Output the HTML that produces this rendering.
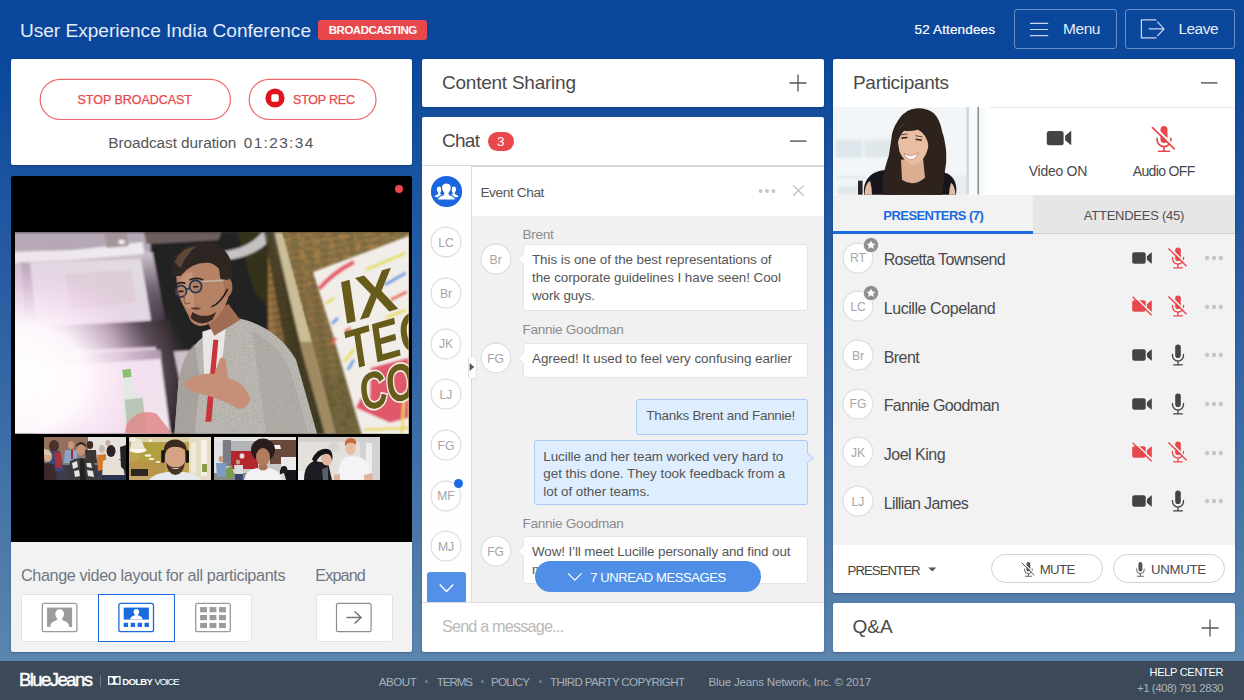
<!DOCTYPE html>
<html><head><meta charset="utf-8"><title>User Experience India Conference</title>
<style>
html,body{margin:0;padding:0}
body{width:1244px;height:700px;overflow:hidden;position:relative;font-family:'Liberation Sans',sans-serif;
background:linear-gradient(180deg,#0a469b 0px,#0b489c 60px,#2a5fa3 300px,#5c85ad 661px,#5c85ad 700px)}
div,span.t,svg{position:absolute;box-sizing:border-box}
span.t{white-space:pre;line-height:1;display:block}
.p{background:#fff;border-radius:2px;box-shadow:0 1px 2px rgba(10,30,60,.3)}
.av{width:31px;height:31px;border-radius:50%;background:#fff;border:1px solid #d9d9d9}
.bub{background:#fff;border:1px solid #e4e4e4;border-radius:3px}
.bb{background:#dfeefe;border:1px solid #a9cbf5;border-radius:3px}
</style></head><body>
<span class="t" style="left:20.00px;top:21.20px;font-size:19.1px;color:#e4ecf8;letter-spacing:-0.028px;">User Experience India Conference</span><div style="left:318px;top:19.5px;width:109px;height:20.5px;background:#e8474c;border-radius:3px"></div><span class="t" style="left:328.80px;top:24.50px;font-size:11.5px;color:#fff;font-weight:700;letter-spacing:-0.493px;">BROADCASTING</span><span class="t" style="left:914.50px;top:23.00px;font-size:13.5px;color:#fff;letter-spacing:0.152px;-webkit-text-stroke:0.2px #fff;">52 Attendees</span><div style="left:1014px;top:9.4px;width:102.6px;height:39.8px;border:1px solid rgba(255,255,255,.38);border-radius:3px"></div><svg style="left:1030px;top:22px" width="19" height="16" viewBox="0 0 19 16"><path d="M0,1.4H18.2M0,7.5H18.2M0,13.7H18.2" stroke="#c9d8ee" stroke-width="1.2" fill="none"/></svg><span class="t" style="left:1063.00px;top:21.00px;font-size:15.5px;color:#e4ecf8;letter-spacing:-0.427px;">Menu</span><div style="left:1125px;top:9.4px;width:110.2px;height:39.8px;border:1px solid rgba(255,255,255,.38);border-radius:3px"></div><svg style="left:1140px;top:18px" width="26" height="22" viewBox="1140 18 26 22"><path d="M1156.4,19.8H1141.4V37.9H1156.4M1148.8,28.9H1163.6M1157.3,21.6L1164,28.9L1157.3,36.2" stroke="#c9d8ee" stroke-width="1.2" fill="none"/></svg><span class="t" style="left:1178.50px;top:21.00px;font-size:15.5px;color:#e4ecf8;letter-spacing:-0.559px;">Leave</span><div class="p" style="left:11px;top:59px;width:401px;height:106px"></div><svg style="left:39px;top:78px" width="340" height="43" viewBox="39 78 340 43"><rect x="40.2" y="79.3" width="190.2" height="40.2" rx="20.1" fill="none" stroke="#f0676b" stroke-width="1.2"/><rect x="249.2" y="79.3" width="126.8" height="40.2" rx="20.1" fill="none" stroke="#f0676b" stroke-width="1.2"/></svg><span class="t" style="left:77.50px;top:94.00px;font-size:12.5px;color:#e8474c;letter-spacing:-0.026px;-webkit-text-stroke:0.25px #e8474c;">STOP BROADCAST</span><svg style="left:265px;top:88px" width="20" height="20" viewBox="-10 -10 20 20"><circle r="9.6" fill="#e0141d"/><rect x="-3.7" y="-3.7" width="7.4" height="7.4" rx="1.6" fill="#fff"/></svg><span class="t" style="left:293.00px;top:94.00px;font-size:12.5px;color:#e8474c;letter-spacing:-0.208px;-webkit-text-stroke:0.25px #e8474c;">STOP REC</span><span class="t" style="left:108.25px;top:135.05px;font-size:15.4px;color:#555;letter-spacing:-0.071px;">Broadcast duration</span><span class="t" style="left:243.75px;top:135.05px;font-size:15.4px;color:#555;letter-spacing:1.368px;">01:23:34</span><div style="left:11px;top:175.5px;width:401px;height:366.5px;background:#000;border-radius:2px 2px 0 0"></div><div style="left:11px;top:541.6px;width:401px;height:110.4px;background:#f2f2f2;border-radius:0 0 2px 2px;box-shadow:0 1px 2px rgba(10,30,60,.3)"></div>
<svg style="left:15px;top:232px" width="393.7" height="201.7" viewBox="0 0 395 202" preserveAspectRatio="none">
<defs>
<filter id="b3" x="-10%" y="-10%" width="120%" height="120%"><feGaussianBlur stdDeviation="1.3"/></filter>
<filter id="b15" x="-10%" y="-10%" width="120%" height="120%"><feGaussianBlur stdDeviation="1.1"/></filter>
<filter id="b07" x="-10%" y="-10%" width="120%" height="120%"><feGaussianBlur stdDeviation="0.6"/></filter>
<radialGradient id="flare" gradientUnits="userSpaceOnUse" cx="0" cy="0" r="120" gradientTransform="translate(2 146) scale(1.45 1.12)"><stop offset="0" stop-color="#fff" stop-opacity="1"/><stop offset="0.4" stop-color="#fff8fd" stop-opacity=".97"/><stop offset="0.62" stop-color="#f8e0f4" stop-opacity=".68"/><stop offset="0.82" stop-color="#eccce8" stop-opacity=".24"/><stop offset="1" stop-color="#e8c8e4" stop-opacity="0"/></radialGradient>
<linearGradient id="wall" x1="0" y1="0" x2="0" y2="1"><stop offset="0" stop-color="#ac8648"/><stop offset="0.35" stop-color="#946f40"/><stop offset="0.7" stop-color="#78663a"/><stop offset="1" stop-color="#686232"/></linearGradient>
<linearGradient id="rfr" x1="0" y1="0" x2="0" y2="1"><stop offset="0" stop-color="#cfc6d0"/><stop offset="0.45" stop-color="#7a6a7a"/><stop offset="1" stop-color="#2e2430"/></linearGradient>
<linearGradient id="mbar" gradientUnits="userSpaceOnUse" x1="20" y1="0" x2="125" y2="0"><stop offset="0" stop-color="#d4b4d0"/><stop offset="0.5" stop-color="#6a506a"/><stop offset="1" stop-color="#2a2028"/></linearGradient>
<pattern id="brick" width="14" height="7" patternUnits="userSpaceOnUse" patternTransform="rotate(-8)"><rect x="0" y="0" width="6" height="3" fill="#c08a4c" opacity=".45"/><rect x="7" y="3.5" width="6" height="3" fill="#4a3e22" opacity=".45"/></pattern>
<filter id="nz" x="0" y="0" width="100%" height="100%"><feTurbulence type="fractalNoise" baseFrequency="0.9" numOctaves="2" seed="3" result="n"/><feColorMatrix in="n" type="matrix" values="0 0 0 0 0.35  0 0 0 0 0.33  0 0 0 0 0.3  1.6 1.6 1.6 0 -1.9"/></filter>
<filter id="nz2" x="0" y="0" width="100%" height="100%"><feTurbulence type="fractalNoise" baseFrequency="0.12 0.3" numOctaves="3" seed="8" result="n"/><feColorMatrix in="n" type="matrix" values="0 0 0 0 0.18  0 0 0 0 0.14  0 0 0 0 0.06  2.2 2.2 2.2 0 -2.6"/><feGaussianBlur stdDeviation="0.8"/></filter>
<clipPath id="card"><path d="M160,202 L164,150 Q170,116 196,100 L222,86 Q262,94 282,128 L303,202Z"/></clipPath>
<clipPath id="wallc"><path d="M268,0 L395,0 L395,14 L300,42 L352,202 L322,202 L298,110Z"/></clipPath>
<clipPath id="pc"><rect x="0" y="0" width="395" height="202"/></clipPath>
</defs>
<g clip-path="url(#pc)">
<rect width="395" height="202" fill="#cbc0ca"/>
<g filter="url(#b3)">
<rect x="-10" y="-10" width="160" height="30" fill="#b6a8b6"/>
<path d="M-5,20 L60,18 L128,10 L130,22 L60,28 L-5,31Z" fill="#eee9ee"/>
<path d="M90,2 L112,1 L114,14 L92,16Z" fill="#a4949c"/><rect x="104" y="8" width="6" height="4" fill="#f4f0f4"/>
<rect x="136" y="-10" width="132" height="112" fill="#242022"/>
<path d="M136,100 L262,60 L262,112 L150,120Z" fill="#242022"/>
<path d="M128,-6 L210,-6 L204,8 L170,10 L132,12Z" fill="#6e5e5e"/>
<path d="M222,-4 L262,-4 L262,84 L240,60Z" fill="#34331c"/>
<path d="M190,20 Q236,22 252,-6 L264,-6 Q250,30 192,29Z" fill="#c6c2c4"/>
<path d="M15,31 L126,27 L137,88 L22,95Z" fill="#e2dae2"/>
<path d="M50,42 L116,38 L122,70 L56,78Z" fill="#d8c6ce" opacity=".6"/>
<path d="M6,30 L15,31 L22,97 L11,99Z" fill="#b4a2b6"/>
<path d="M126,22 L138,20 L152,94 L137,92Z" fill="url(#rfr)"/>
<path d="M20,95 L156,88 L158,114 L22,120Z" fill="url(#mbar)"/>
<path d="M141,112 L157,110 L175,202 L155,202Z" fill="#2a2028"/>
<path d="M28,132 L146,126 L156,202 L20,202Z" fill="#f2e9ef"/>
<path d="M34,124 L146,118 L147,127 L35,135Z" fill="#a48ea2"/>
<rect x="254" y="-10" width="160" height="222" fill="url(#wall)"/>
<rect x="254" y="-10" width="160" height="222" fill="url(#brick)"/>
<path d="M300,150 L350,140 L352,202 L316,202Z" fill="#5a5428" opacity=".5"/>
<path d="M256,-4 L267,-4 L298,110 L322,202 L309,202 L286,110Z" fill="#cbbd96"/>
<path d="M286,110 L298,110 L322,202 L309,202Z" fill="#a08a62"/>
<path d="M248,-10 L258,-10 L288,120 L311,202 L292,202 L272,120Z" fill="#2e2c1c" opacity=".75"/>
<rect x="-5" y="-4" width="410" height="5" fill="#3a3028" opacity=".7"/>
</g>
<g clip-path="url(#wallc)"><rect x="254" y="0" width="141" height="202" filter="url(#nz2)" opacity=".8"/></g>
<rect width="395" height="202" fill="url(#flare)"/>
<g filter="url(#b15)">
<path d="M299,40 L363,16 L400,2 L400,210 L350,210 L318,100Z" fill="#f1ede8"/>
<path d="M305,57 Q320,40 340,30" stroke="#e6586a" stroke-width="4.4" fill="none"/>
<path d="M352,38 L392,21" stroke="#e6de5c" stroke-width="3" fill="none"/>
<path d="M371,53 L392,41 M318,92 L324,86 M334,138 L340,128" stroke="#6a9ee0" stroke-width="3" fill="none"/>
<path d="M377,68 L393,60 M331,100 L337,96 M318,112 L322,106" stroke="#ea6a52" stroke-width="3" fill="none"/>
<path d="M312,72 L320,66 M330,130 L340,118 M372,86 L392,78" stroke="#e8de5a" stroke-width="3" fill="none"/>
<path d="M357,136 L395,126 L395,186 L376,191 L342,176 L347,166 L356,168Z" fill="#e0586a"/>
<path d="M350,198 L395,196 M391,160 L388,202" stroke="#ead85a" stroke-width="2.5" fill="none"/>
</g>
<g filter="url(#b07)" font-family="'Liberation Sans',sans-serif" font-weight="700" fill="#675c1b">
<text transform="matrix(0.961 -0.276 0.147 0.989 329.3 92.9)" font-size="61" textLength="58" lengthAdjust="spacingAndGlyphs">IX</text>
<text transform="matrix(0.961 -0.276 0.147 0.989 335.7 138.5)" font-size="56" textLength="86" lengthAdjust="spacingAndGlyphs">TEC</text>
<text transform="matrix(0.961 -0.276 0.147 0.989 349 180)" font-size="52" textLength="57" lengthAdjust="spacingAndGlyphs" stroke="#f1ede8" stroke-width="3.5" paint-order="stroke">CO</text>
</g>
<g filter="url(#b07)">
<!-- bottle -->
<path d="M108,142 L116,141 L119,156 Q128,166 130,180 L133,202 L112,202 L108,178 Q106,166 110,156Z" fill="#e4e8e2"/>
<path d="M110,168 L128,166 L132,202 L113,202Z" fill="#a8b8a6" opacity=".7"/>
<path d="M107.5,138 L116,137 L117,145 L108.5,146Z" fill="#8cc070"/>
<path d="M112,192 Q124,176 142,182 L158,202 L110,202Z" fill="#e08a8a" opacity=".85"/>
<!-- man body -->
<path d="M160,202 L164,150 Q170,116 196,100 L222,86 Q262,94 282,128 L303,202Z" fill="#c2beb9"/>
<path d="M238,100 Q268,112 280,150 L294,202 L252,202Z" fill="#aeaaa5" opacity=".7"/>
<path d="M160,202 L164,150 Q168,124 180,112 L186,150 L180,202Z" fill="#9a9590" opacity=".6"/>
<g clip-path="url(#card)"><rect x="155" y="80" width="155" height="125" filter="url(#nz)" opacity=".55"/></g>
<path d="M188,100 L212,92 L206,146 L190,150Z" fill="#ebe6e6"/>
<path d="M199,108 L204,108 L197,190 L191,190Z" fill="#c8343c"/>
<path d="M190,84 L214,72 L226,88 L200,104Z" fill="#a06c52"/>
<!-- head -->
<path d="M162,46 Q160,22 182,16 Q206,10 214,32 L216,58 Q212,76 204,84 Q196,95 184,94 Q176,92 174,84 L168,72 Q162,60 162,46Z" fill="#b58266"/>
<path d="M164,52 Q168,40 178,40 L180,80 Q172,76 168,70Z" fill="#c89c82" opacity=".7"/>
<path d="M158,44 Q154,18 180,12 Q208,5 217,30 L218,54 L211,56 Q210,36 196,31 Q178,29 166,44Z" fill="#2e2521"/>
<path d="M160,30 Q166,16 182,14 Q172,22 166,36Z" fill="#5c4638"/>
<path d="M176,86 Q186,96 198,88 L202,80 Q190,88 178,80Z" fill="#3a2a22"/>
<ellipse cx="166.6" cy="59.4" rx="5.4" ry="5.8" fill="#a87a62" fill-opacity=".5" stroke="#2e3450" stroke-width="1.8"/>
<ellipse cx="181.2" cy="54.6" rx="6" ry="6.2" fill="#a87a62" fill-opacity=".5" stroke="#2e3450" stroke-width="1.8"/>
<path d="M172,57.5 L175.4,56.2" stroke="#2e3450" stroke-width="1.6"/>
<path d="M164,59.5 h5 M178.6,54.8 h5.4" stroke="#2a1c18" stroke-width="1.6"/>
<path d="M160.5,53 Q166,49.5 171,51.5 M175,48 Q182,45 189,48" stroke="#2a1c18" stroke-width="1.7" fill="none"/>
<path d="M187,49.6 L210,48.4" fill="none" stroke="#c4b4a0" stroke-width="1.7"/>
<path d="M171,62 Q168,70 171.5,72 L176,71" fill="none" stroke="#8e5c44" stroke-width="1.4"/>
<path d="M175.6,76 Q181,74.5 187,76.4 Q181,79.6 175.6,76Z" fill="#6a3a30"/>
<path d="M209,46 Q219,44 218,58 Q215,68 210,64Z" fill="#a87458"/>
<path d="M204,30 L216,32 L214,48 L206,47Z" fill="#2e2521"/>
<path d="M213.5,57 Q206,72 197,75" fill="none" stroke="#1a1a1a" stroke-width="1.5"/>
<!-- right hand -->
<path d="M170,150 Q186,140 200,142 L206,126 Q212,124 212,132 L214,146 Q232,152 236,168 Q232,180 222,176 Q204,166 186,162 Q170,158 170,150Z" fill="#c69078"/>
</g>
</g></svg>
<svg style="left:44.3px;top:437px" width="82" height="43" viewBox="0 0 82 43"><g filter="url(#b07)"><rect width="82" height="43" fill="#8a7a72"/>
<rect x="0" y="0" width="46" height="18" fill="#94705f"/><rect x="44" y="0" width="38" height="22" fill="#e6e2de"/>
<rect x="0" y="28" width="82" height="15" fill="#3a3a48"/>
<ellipse cx="10" cy="9" rx="5" ry="6" fill="#4a3026"/><path d="M4,14 L16,14 L20,34 L2,34Z" fill="#3a4a78"/><path d="M10,15 L17,16 L18,32 L12,30Z" fill="#a83038"/>
<ellipse cx="4" cy="20" rx="4" ry="5" fill="#d8a88c"/><path d="M0,26 L10,27 L13,43 L0,43Z" fill="#3a2c2a"/><path d="M0,12 Q6,12 8,18 L0,18Z" fill="#d8c8a8"/>
<ellipse cx="27" cy="8" rx="3" ry="4" fill="#c99a80"/><path d="M21,13 L33,13 L34,26 L20,26Z" fill="#8aa4cc"/><rect x="27" y="13" width="2" height="9" fill="#a8282e"/>
<ellipse cx="37" cy="13" rx="4.5" ry="5.5" fill="#c49478"/><path d="M32,10 Q37,4 42,10 L42,8 Q37,2 32,8Z" fill="#2a2422"/>
<path d="M26,24 Q36,18 50,24 L53,43 L24,43Z" fill="#3a3a3a"/><path d="M28,26 L33,24 L34,30 L29,32Z M30,34 L35,33 L36,39 L31,40Z M42,24 L47,26 L48,31 L43,30Z M43,33 L49,34 L50,40 L44,39Z M36,40 L40,40 L40,43 L36,43Z" fill="#e4e4e4"/><path d="M36,22 L40,22 L42,43 L36,43Z" fill="#222"/>
<ellipse cx="46" cy="8" rx="3.2" ry="4" fill="#3a2a26"/><path d="M41,13 L52,13 L53,26 L42,26Z" fill="#3a3434"/>
<ellipse cx="58" cy="12" rx="3" ry="4" fill="#c8b8a8"/><path d="M53,18 L62,17 L62,32 L54,34Z" fill="#d07a2a"/>
<ellipse cx="67" cy="14" rx="4.5" ry="6" fill="#2a2426"/><path d="M59,24 Q68,18 78,24 L81,40 L58,40Z" fill="#e8e0d4"/>
<path d="M76,10 L82,8 L82,34 L77,30Z" fill="#222428"/><ellipse cx="64" cy="6" rx="2.4" ry="3" fill="#caa"/>
<path d="M58,38 L82,38 L82,43 L58,43Z" fill="#2a3050"/></g></svg><svg style="left:129.1px;top:437px" width="82" height="43" viewBox="0 0 82 43"><g filter="url(#b07)"><rect width="82" height="43" fill="#bda352"/>
<rect x="0" y="0" width="82" height="5" fill="#dccfa8"/><rect x="0" y="24" width="36" height="19" fill="#b8954c"/>
<rect x="60" y="0" width="22" height="43" fill="#e4dcc4"/><rect x="72" y="3" width="6" height="36" fill="#f4f0e6"/><rect x="62" y="6" width="5" height="30" fill="#f0ead8"/>
<rect x="10" y="6" width="24" height="18" fill="#b0a040"/>
<ellipse cx="9" cy="13" rx="8.5" ry="3" fill="#fbf8ee"/><path d="M3,2 L12,2 L16,12 L1,12Z" fill="#eae4d2"/><ellipse cx="4" cy="2.5" rx="3.5" ry="2" fill="#f4f0e4"/>
<ellipse cx="19" cy="18.5" rx="3.4" ry="1.2" fill="#f8f4e8"/><ellipse cx="22.5" cy="22" rx="3" ry="1.1" fill="#f8f4e8"/><ellipse cx="29" cy="25" rx="2.4" ry="1" fill="#f4eedc"/><circle cx="21.5" cy="3.5" r="1.2" fill="#fff"/>
<rect x="2" y="32" width="17" height="7" fill="#2e2824"/><rect x="0" y="39" width="30" height="4" fill="#c8a868"/>
<path d="M20,43 Q26,36 38,35 L56,35 Q68,37 72,43Z" fill="#e6e8ec"/>
<ellipse cx="46.5" cy="22" rx="9.8" ry="14" fill="#d6a484"/>
<path d="M35,18 Q33,3 46,2.5 Q59,3 58,18 L56,13 Q51,9 43,10 Q37,11 36,18Z" fill="#3a2a20"/>
<path d="M37,25 Q38,37 46.5,38 Q55,37 56,25 Q53,31 46.5,30 Q40,31 37,25Z" fill="#4a3226"/>
<path d="M42,30.5 Q46.5,33.5 51,30.5 Q46.5,31.5 42,30.5Z" fill="#f4eeee"/>
<rect x="32.2" y="13" width="3.6" height="13" rx="1.7" fill="#181818"/><rect x="56.4" y="13" width="3.6" height="13" rx="1.7" fill="#181818"/>
<rect x="73" y="27" width="5" height="8" fill="#8a9a4a"/></g></svg><svg style="left:213.8px;top:437px" width="82" height="43" viewBox="0 0 82 43"><g filter="url(#b07)"><rect width="82" height="43" fill="#c8c8c8"/>
<rect x="0" y="0" width="82" height="4" fill="#e8e6e2"/><rect x="0" y="4" width="8" height="39" fill="#e2e2e2"/>
<rect x="9" y="3" width="8" height="26" fill="#7a7e84"/><rect x="17" y="4" width="24" height="10" fill="#b4b4b8"/>
<rect x="17" y="14" width="27" height="18" fill="#b4282e"/><ellipse cx="28" cy="19" rx="2.4" ry="2.8" fill="#e8d8d8"/>
<rect x="56" y="3" width="26" height="24" fill="#6a4a3c"/><rect x="67" y="20" width="15" height="14" fill="#eaeaec"/>
<path d="M60,8 L66,8 L67,12 L59,12Z" fill="#f4f4f4"/>
<rect x="0" y="36" width="40" height="7" fill="#8a8a8a"/><rect x="66" y="33" width="16" height="10" fill="#18181a"/>
<ellipse cx="7" cy="22" rx="2.4" ry="3" fill="#c8987c"/><path d="M2,26 L12,26 L13,40 L3,40Z" fill="#7a9cc4"/>
<ellipse cx="24" cy="25" rx="2.2" ry="2.6" fill="#c89a80"/><path d="M20,28 L29,28 L29,38 L21,38Z" fill="#dcdcdc"/><rect x="21" y="37" width="8" height="6" fill="#3a4a6a"/>
<path d="M12,32 L18,28 L20,40 L12,42Z" fill="#7a9a50"/>
<ellipse cx="70" cy="33" rx="3.4" ry="4" fill="#1c1a1c"/><path d="M64,38 L70,36 L72,43 L64,43Z" fill="#dcdcdc"/>
<ellipse cx="49" cy="13" rx="12" ry="11.5" fill="#2a1f1c"/>
<ellipse cx="49" cy="20" rx="7" ry="9" fill="#b27c5e"/><path d="M45,28 L53,28 L54,34 L44,34Z" fill="#a87254"/>
<path d="M30,43 Q32,32 44,31 Q49,36 54,31 Q66,32 67,43Z" fill="#f2f2f2"/></g></svg><svg style="left:297.8px;top:437px" width="82" height="43" viewBox="0 0 82 43"><g filter="url(#b07)"><rect width="82" height="43" fill="#e4e0dc"/>
<rect x="0" y="0" width="82" height="5" fill="#d4d0cc"/><rect x="62" y="2" width="20" height="41" fill="#d2d2d4"/><rect x="68" y="6" width="6" height="30" fill="#eeeef0"/>
<rect x="0" y="34" width="10" height="9" fill="#f0f0f2"/><ellipse cx="36" cy="10" rx="6" ry="5" fill="#d8d4d0"/>
<path d="M6,43 Q6,28 16,24 L30,26 L34,43Z" fill="#1c1c22"/>
<path d="M14,22 Q20,10 30,12 Q36,14 34,24 Q30,16 24,18 Q18,22 18,28Z" fill="#181618"/>
<ellipse cx="28.5" cy="22.5" rx="5.2" ry="6" fill="#e2b69c" transform="rotate(-18 28.5 22.5)"/>
<path d="M22,16 Q28,12 34,18 Q30,15 24,18Z" fill="#181618"/>
<path d="M24,32 L30,30 L30,43 L25,43Z" fill="#5a6068"/>
<path d="M40,43 Q40,24 48,20 L58,19 Q70,22 72,32 L74,43Z" fill="#f4f4f6"/>
<ellipse cx="52.5" cy="11.5" rx="5" ry="6.5" fill="#e8bea2"/>
<path d="M47,9 Q46,1 53,1 Q59,1 58,8 Q55,5 50,6Z" fill="#c8683a"/>
<path d="M66,38 L74,36 L75,43 L66,43Z" fill="#e0b49a"/><path d="M36,38 L42,37 L42,43 L36,43Z" fill="#e0b49a"/></g></svg><div style="left:394.5px;top:184.5px;width:8px;height:8px;background:#e8474c;border-radius:50%"></div><span class="t" style="left:21.00px;top:567.15px;font-size:16.2px;color:#6f7680;letter-spacing:-0.371px;">Change video layout for all participants</span><span class="t" style="left:315.30px;top:567.15px;font-size:16.2px;color:#6f7680;letter-spacing:-0.881px;">Expand</span><div style="left:21px;top:593.5px;width:231px;height:48px;background:#fff;border:1px solid #e2e2e2;border-radius:3px"></div><div style="left:97.5px;top:593.5px;width:77.5px;height:48px;border:1px solid #1a6ae0"></div><div style="left:315.5px;top:593.5px;width:77.5px;height:48px;background:#fff;border:1px solid #e2e2e2;border-radius:3px"></div>
<svg style="left:21px;top:593px" width="380" height="50" viewBox="21 593 380 50">
<g fill="none" stroke="#9a9a9a" stroke-width="1.3">
<rect x="42.3" y="603.3" width="34.6" height="28.4" rx="2"/>
<rect x="195.7" y="603.3" width="34.6" height="28.4" rx="2"/>
</g>
<rect x="336.5" y="603.3" width="34.6" height="28.4" rx="1.8" fill="none" stroke="#8c8c8c" stroke-width="1.2"/>
<path d="M346.4,617.5H360.6M354.6,611.5L361,617.5L354.6,623.5" fill="none" stroke="#777" stroke-width="1.6"/>
<rect x="118.9" y="603.3" width="34.6" height="28.4" rx="2" fill="none" stroke="#1a6ae0" stroke-width="1.3"/>
<!-- icon1 person -->
<rect x="47.1" y="607.6" width="25" height="19.3" fill="#9b9b9b"/>
<path d="M50.4,626.9 C50.4,622 53.5,621.6 56.6,620.2 C57.6,619.7 57.4,618.6 56.6,617.6 C54.2,614.8 55.2,609.3 59.7,609.3 C64.2,609.3 65.2,614.8 62.8,617.6 C62,618.6 61.8,619.7 62.8,620.2 C65.9,621.6 69,622 69,626.9 Z" fill="#fff"/>
<!-- icon2 -->
<rect x="123.7" y="607.6" width="25.2" height="12" fill="#1a6ae0"/>
<path d="M130.3,619.6 C130.3,616.6 132.3,616.4 134.3,615.5 C135,615.2 134.9,614.5 134.4,613.9 C132.8,612.1 133.5,608.9 136.4,608.9 C139.3,608.9 140,612.1 138.4,613.9 C137.9,614.5 137.8,615.2 138.5,615.5 C140.5,616.4 142.5,616.6 142.5,619.6 Z" fill="#fff"/>
<g fill="#1a6ae0"><rect x="123.7" y="622.8" width="4.4" height="4.2"/><rect x="130.7" y="622.8" width="4.4" height="4.2"/><rect x="137.6" y="622.8" width="4.4" height="4.2"/><rect x="144.5" y="622.8" width="4.4" height="4.2"/></g>
<!-- icon3 grid -->
<g fill="#9b9b9b">
<rect x="200.1" y="607.1" width="6.9" height="5.2"/><rect x="209.5" y="607.1" width="6.9" height="5.2"/><rect x="219" y="607.1" width="6.9" height="5.2"/><rect x="200.1" y="615" width="6.9" height="5.2"/><rect x="209.5" y="615" width="6.9" height="5.2"/><rect x="219" y="615" width="6.9" height="5.2"/><rect x="200.1" y="622.9" width="6.9" height="5.2"/><rect x="209.5" y="622.9" width="6.9" height="5.2"/><rect x="219" y="622.9" width="6.9" height="5.2"/>
</g></svg>
<div class="p" style="left:422px;top:59px;width:401.5px;height:48px"></div><span class="t" style="left:442.00px;top:73.25px;font-size:19px;color:#4a4a4a;letter-spacing:-0.238px;">Content Sharing</span><svg style="left:789px;top:74px" width="18" height="18" viewBox="0 0 18 18"><path d="M9,0.5V17.5M0.5,9H17.5" stroke="#555" stroke-width="1.3" fill="none"/></svg><div class="p" style="left:422px;top:117px;width:401.5px;height:535px"></div><span class="t" style="left:442.00px;top:131.25px;font-size:19px;color:#4a4a4a;letter-spacing:-0.714px;">Chat</span><div style="left:487.5px;top:132px;width:26.5px;height:19px;background:#e8474c;border-radius:9.5px"></div><span class="t" style="left:497.04px;top:135.00px;font-size:13.5px;color:#fff;">3</span><svg style="left:789px;top:136px" width="19" height="10" viewBox="789 136 19 10"><path d="M790,141.1H806.5" stroke="#4a4a4a" stroke-width="1.3"/></svg><div style="left:422px;top:165px;width:401.5px;height:2px;background:#dadada"></div><div style="left:422px;top:166.4px;width:48.5px;height:436px;background:#fefefe"></div><div style="left:470.5px;top:166.4px;width:1px;height:436px;background:#dadada"></div><div style="left:471.5px;top:215.5px;width:352px;height:386.5px;background:#f1f1f1"></div>
<svg style="left:430px;top:175px" width="33" height="33" viewBox="430 175 33 33">
<circle cx="446.5" cy="191.5" r="15.6" fill="#1a66e0"/>
<g fill="#fff">
<path d="M434.6,197 C434.6,195 437,194.8 438.2,193.9 C438.6,193.4 438.4,192.8 438,192.2 C436.2,190 436.6,186.4 439.2,186.4 C441.8,186.4 442.2,190 440.6,192.2 C440.2,192.8 440,193.4 440.4,193.9 C441.2,194.6 442.5,194.8 443,195.6 L441,197.6 Z"/>
<path d="M458.4,197 C458.4,195 456,194.8 454.8,193.9 C454.4,193.4 454.6,192.8 455,192.2 C456.8,190 456.4,186.4 453.8,186.4 C451.2,186.4 450.8,190 452.4,192.2 C452.8,192.8 453,193.4 452.6,193.9 C451.8,194.6 450.5,194.8 450,195.6 L452,197.6 Z"/>
<path d="M438.6,198.8 C438.6,195.6 441.4,195.4 443.6,194.2 C444.4,193.7 444.2,192.9 443.6,192.2 C441,189.4 441.6,184.2 446.4,184.2 C451.2,184.2 451.8,189.4 449.2,192.2 C448.6,192.9 448.4,193.7 449.2,194.2 C451.4,195.4 454.2,195.6 454.2,198.8 Z" stroke="#1a66e0" stroke-width="1" transform="translate(446.4 191.55) scale(1.16) translate(-446.4 -191.55)"/>
</g></svg>
<span class="t" style="left:480.40px;top:185.90px;font-size:13.7px;color:#555;letter-spacing:-0.413px;">Event Chat</span><svg style="left:755.2px;top:186.6px" width="24" height="8" viewBox="-12 -4 24 8"><g fill="#c6c6c6"><circle cx="-6.4" cy="0" r="2.0"/><circle cx="0" cy="0" r="2.0"/><circle cx="6.4" cy="0" r="2.0"/></g></svg><svg style="left:792px;top:184px" width="13" height="13" viewBox="0 0 13 13"><path d="M1.2,1.4L11.6,11.8M11.6,1.4L1.2,11.8" stroke="#bdbdbd" stroke-width="1.3" fill="none"/></svg><svg style="left:429.00px;top:225.20px" width="34" height="34" viewBox="-17 -17 34 34"><circle r="14.9" fill="#fff" stroke="#dcdcdc" stroke-width="1.1"/></svg><span class="t" style="left:438.20px;top:237.15px;font-size:12.2px;color:#a6a6a6;">LC</span><svg style="left:429.00px;top:276.00px" width="34" height="34" viewBox="-17 -17 34 34"><circle r="14.9" fill="#fff" stroke="#dcdcdc" stroke-width="1.1"/></svg><span class="t" style="left:439.91px;top:288.15px;font-size:12.2px;color:#a6a6a6;">Br</span><svg style="left:429.00px;top:326.70px" width="34" height="34" viewBox="-17 -17 34 34"><circle r="14.9" fill="#fff" stroke="#dcdcdc" stroke-width="1.1"/></svg><span class="t" style="left:438.88px;top:338.15px;font-size:12.2px;color:#a6a6a6;">JK</span><svg style="left:429.00px;top:377.40px" width="34" height="34" viewBox="-17 -17 34 34"><circle r="14.9" fill="#fff" stroke="#dcdcdc" stroke-width="1.1"/></svg><span class="t" style="left:439.56px;top:389.15px;font-size:12.2px;color:#a6a6a6;">LJ</span><svg style="left:429.00px;top:428.00px" width="34" height="34" viewBox="-17 -17 34 34"><circle r="14.9" fill="#fff" stroke="#dcdcdc" stroke-width="1.1"/></svg><span class="t" style="left:437.53px;top:440.15px;font-size:12.2px;color:#a6a6a6;">FG</span><svg style="left:429.00px;top:478.70px" width="34" height="34" viewBox="-17 -17 34 34"><circle r="14.9" fill="#fff" stroke="#dcdcdc" stroke-width="1.1"/></svg><span class="t" style="left:437.20px;top:490.15px;font-size:12.2px;color:#a6a6a6;">MF</span><svg style="left:429.00px;top:529.30px" width="34" height="34" viewBox="-17 -17 34 34"><circle r="14.9" fill="#fff" stroke="#dcdcdc" stroke-width="1.1"/></svg><span class="t" style="left:437.88px;top:541.15px;font-size:12.2px;color:#a6a6a6;">MJ</span><div style="left:453.5px;top:479px;width:9px;height:9px;background:#1a6ae0;border-radius:50%"></div><div style="left:427px;top:572.2px;width:38.5px;height:30px;background:#5590e8;border-radius:3px 3px 0 0"></div><svg style="left:438px;top:582px" width="17" height="12" viewBox="0 0 17 12"><path d="M1.7,2.6L8.5,9.4L15.3,2.6" stroke="#fff" stroke-width="1.4" fill="none"/></svg><div style="left:467.5px;top:355.5px;width:9px;height:23px;background:#fdfdfd;border:1px solid #e2e2e2;border-radius:3px"></div><svg style="left:468.6px;top:362px" width="6" height="10" viewBox="0 0 6 10"><path d="M0.6,1L5.2,5L0.6,9Z" fill="#555"/></svg><span class="t" style="left:522.40px;top:227.95px;font-size:13.6px;color:#8c8c8c;letter-spacing:-0.250px;">Brent</span><svg style="left:478.60px;top:242.00px" width="34" height="34" viewBox="-17 -17 34 34"><circle r="14.9" fill="#fff" stroke="#dcdcdc" stroke-width="1.1"/></svg><span class="t" style="left:489.51px;top:254.15px;font-size:12.2px;color:#a6a6a6;">Br</span><div class="bub" style="left:522.5px;top:243.5px;width:285px;height:67px"></div><svg style="left:517.3px;top:253px" width="7.2" height="12" viewBox="0 0 7.2 12"><path d="M7.2,0.5L1,6L7.2,11.5" fill="#fff" stroke="#e4e4e4" stroke-width="1"/></svg><span class="t" style="left:532.00px;top:253.05px;font-size:13.4px;color:#555;letter-spacing:-0.059px;">This is one of the best representations of</span><span class="t" style="left:532.00px;top:271.05px;font-size:13.4px;color:#555;letter-spacing:-0.046px;">the corporate guidelines I have seen! Cool</span><span class="t" style="left:532.00px;top:289.05px;font-size:13.4px;color:#555;letter-spacing:-0.111px;">work guys.</span><span class="t" style="left:522.40px;top:322.95px;font-size:13.6px;color:#8c8c8c;letter-spacing:-0.273px;">Fannie Goodman</span><svg style="left:478.60px;top:341.30px" width="34" height="34" viewBox="-17 -17 34 34"><circle r="14.9" fill="#fff" stroke="#dcdcdc" stroke-width="1.1"/></svg><span class="t" style="left:487.13px;top:353.15px;font-size:12.2px;color:#a6a6a6;">FG</span><div class="bub" style="left:522.5px;top:342.5px;width:285px;height:35.5px"></div><svg style="left:517.3px;top:352.3px" width="7.2" height="12" viewBox="0 0 7.2 12"><path d="M7.2,0.5L1,6L7.2,11.5" fill="#fff" stroke="#e4e4e4" stroke-width="1"/></svg><span class="t" style="left:532.00px;top:352.05px;font-size:13.4px;color:#555;letter-spacing:-0.045px;">Agreed! It used to feel very confusing earlier</span><div class="bb" style="left:636.3px;top:399px;width:171.5px;height:35.5px"></div><span class="t" style="left:646.30px;top:409.05px;font-size:13.4px;color:#555;letter-spacing:-0.221px;">Thanks Brent and Fannie!</span><div class="bb" style="left:534px;top:440.2px;width:273.8px;height:64.5px"></div><svg style="left:806.5999999999999px;top:452px" width="7.2" height="12" viewBox="0 0 7.2 12"><path d="M0,0.5L6.2,6L0,11.5" fill="#dfeefe" stroke="#a9cbf5" stroke-width="1"/></svg><span class="t" style="left:543.30px;top:450.05px;font-size:13.4px;color:#555;letter-spacing:-0.049px;">Lucille and her team worked very hard to</span><span class="t" style="left:543.30px;top:467.05px;font-size:13.4px;color:#555;letter-spacing:-0.011px;">get this done. They took feedback from a</span><span class="t" style="left:543.30px;top:485.05px;font-size:13.4px;color:#555;letter-spacing:-0.038px;">lot of other teams.</span><span class="t" style="left:522.40px;top:516.95px;font-size:13.6px;color:#8c8c8c;letter-spacing:-0.273px;">Fannie Goodman</span><svg style="left:478.60px;top:534.30px" width="34" height="34" viewBox="-17 -17 34 34"><circle r="14.9" fill="#fff" stroke="#dcdcdc" stroke-width="1.1"/></svg><span class="t" style="left:487.13px;top:546.15px;font-size:12.2px;color:#a6a6a6;">FG</span><div class="bub" style="left:522.5px;top:536.4px;width:285px;height:48px"></div><svg style="left:517.3px;top:545.3px" width="7.2" height="12" viewBox="0 0 7.2 12"><path d="M7.2,0.5L1,6L7.2,11.5" fill="#fff" stroke="#e4e4e4" stroke-width="1"/></svg><span class="t" style="left:532.00px;top:545.05px;font-size:13.4px;color:#555;letter-spacing:-0.106px;">Wow! I’ll meet Lucille personally and find out</span><span class="t" style="left:532.00px;top:563.05px;font-size:13.4px;color:#555;">more.</span><div style="left:534.7px;top:560.8px;width:226.5px;height:31px;background:#4f8fe8;border-radius:15.5px"></div><svg style="left:566px;top:571px" width="18" height="12" viewBox="0 0 18 12"><path d="M2,2.4L8.8,9.2L15.6,2.4" stroke="#fff" stroke-width="1.3" fill="none"/></svg><span class="t" style="left:590.30px;top:571.25px;font-size:13px;color:#fff;letter-spacing:-0.396px;">7 UNREAD MESSAGES</span><div style="left:422px;top:601.5px;width:401.5px;height:1px;background:#dcdcdc"></div><span class="t" style="left:442.00px;top:618.15px;font-size:16.2px;color:#b9b9b9;letter-spacing:-0.812px;">Send a message...</span><div class="p" style="left:833px;top:59px;width:401.5px;height:534.3px"></div><span class="t" style="left:853.00px;top:73.25px;font-size:19px;color:#4a4a4a;letter-spacing:-0.298px;">Participants</span><svg style="left:1200px;top:78px" width="19" height="10" viewBox="1200 78 19 10"><path d="M1201,82.9H1217.5" stroke="#4a4a4a" stroke-width="1.3"/></svg><div style="left:833px;top:106.5px;width:401.5px;height:1px;background:#e6e6e6"></div>
<svg style="left:833px;top:107.3px" width="157" height="87.4" viewBox="833 107.3 157 87.4">
<defs><linearGradient id="wfade" x1="0" x2="1"><stop offset="0" stop-color="#f2f5f7"/><stop offset="1" stop-color="#fff"/></linearGradient></defs>
<rect x="833" y="107.3" width="157" height="87.4" fill="#f3f6f8"/>
<g filter="url(#b15)">
<rect x="836" y="141" width="28" height="17" fill="#dde6ea"/><rect x="864" y="141" width="26" height="17" fill="#e0e8ec"/>
<rect x="836" y="139" width="56" height="2.5" fill="#e6ecef"/><rect x="836" y="176" width="30" height="3" fill="#e2e9ec"/>
<rect x="838" y="186" width="20" height="9" fill="#dfe7ea"/><rect x="950" y="176" width="18" height="19" fill="#e6ecef"/>
<rect x="862" y="140" width="2.5" height="18" fill="#eef2f4"/>
</g>
<rect x="966.5" y="107.3" width="2.4" height="87.4" fill="#c8d6dd"/>
<rect x="969" y="107.3" width="8" height="87.4" fill="#f8fafb"/>
<rect x="977.4" y="107.3" width="1.6" height="87.4" fill="#8c9499"/>
<rect x="979" y="107.3" width="11" height="87.4" fill="url(#wfade)"/>
<g filter="url(#b07)">
<rect x="858" y="181" width="4.6" height="14" fill="#2a2426"/>
<path d="M864,195 Q862,176 880,171 L900,168 L930,168 L948,174 Q958,180 956,195Z" fill="#17161a"/>
<path d="M864.5,195 Q865,184 870,181 Q872,188 872,195Z M955.5,195 Q955,186 951,183 Q949,190 949,195Z" fill="#e6bca2"/>
<path d="M917.5,108.6 Q905,109 898.3,120.4 Q892,130 891.5,138.2 Q890,148 888.8,156 Q886,164 884.7,169.6 Q882,180 882,186 L884,195 L942,195 Q944,184 944.8,172.3 Q947,162 946.2,151.8 Q945,140 942,131.3 Q940,120 933.9,113.6 Q927,108.4 917.5,108.6Z" fill="#2e221d"/>
<path d="M901,160 L923,158 L925,178 Q913,188 902,180Z" fill="#dcae92"/>
<path d="M898,143 Q896.5,130 903,125 Q914,121 923,127 Q929,134 928.4,146 Q927,156 921,161 Q915,166 910,164.2 Q903,160 899.5,152Z" fill="#e8bda2"/>
<path d="M897,146 Q895,128 906,123.5 Q918,120 926,128 Q931,136 929,148 Q927,134 918,130 Q910,132 904,131 Q899,136 897,146Z" fill="#2e221d"/>
<path d="M904,153.5 Q911,158.5 918,153 Q916,160 910.5,160 Q906,159 904,153.5Z" fill="#fff" stroke="#c4766c" stroke-width="0.7"/>
<path d="M901.5,138.4 l6,-0.6 M915.5,139.6 l6.5,1" stroke="#3a2a26" stroke-width="1.6"/>
<path d="M901,135.2 l6.5,-1 M915.5,136 l7,1.2" stroke="#4a3630" stroke-width="0.9"/>
<path d="M886,172 Q890,184 888,195 L900,195 Q898,180 901,168Z M944,170 Q938,184 940,195 L926,195 Q928,180 924,166Z" fill="#2e221d"/>
</g></svg>
<svg style="left:1043.50px;top:123.20px;color:#444;fill:#444" width="30.0" height="30.0" viewBox="-12 -12 24 24"><rect x="-9.8" y="-5.7" width="13.5" height="11.4" rx="2"/><path d="M4.9,-1.8 L9.2,-5.4 Q9.8,-5.8 9.8,-5 L9.8,5 Q9.8,5.8 9.2,5.4 L4.9,1.8 Z"/></svg><span class="t" style="left:1028.75px;top:164.25px;font-size:14px;color:#4a4a4a;letter-spacing:-0.279px;">Video ON</span><svg style="left:1149.00px;top:123.60px;color:#e8474c;fill:#e8474c" width="30.0" height="30.0" viewBox="-12 -12 24 24"><rect x="-2.8" y="-10.5" width="5.6" height="13.6" rx="2.8"/><path d="M-5.5,-0.6 V0.6 A5.5,5.5 0 0 0 5.5,0.6 V-0.6" fill="none" stroke="currentColor" stroke-width="1.3" stroke-linecap="round"/><path d="M0,6.2 V9.6 M-4.4,9.8 H4.4" fill="none" stroke="currentColor" stroke-width="1.3" stroke-linecap="round"/><path d="M-8.4,-10.4 L9.8,7.4" stroke="#fff" stroke-width="1.6"/><path d="M-9.6,-9.5 L8.6,8.3" stroke="#e8474c" stroke-width="1.4"/></svg><span class="t" style="left:1132.75px;top:164.25px;font-size:14px;color:#4a4a4a;letter-spacing:-0.650px;">Audio OFF</span><div style="left:833px;top:195px;width:200px;height:38.5px;background:#f2f2f2"></div><div style="left:1033px;top:195px;width:201.5px;height:38.5px;background:#e6e6e6;border-bottom:1px solid #d0d0d0"></div><div style="left:833px;top:231px;width:200px;height:2.5px;background:#1a6ae0"></div><span class="t" style="left:883.30px;top:209.25px;font-size:13px;color:#1a6ae0;font-weight:700;letter-spacing:-0.549px;">PRESENTERS (7)</span><span class="t" style="left:1083.80px;top:209.25px;font-size:13px;color:#505050;letter-spacing:-0.252px;">ATTENDEES (45)</span><div style="left:833px;top:233.5px;width:401.5px;height:311px;background:#f2f2f2"></div><svg style="left:841.00px;top:240.80px" width="34" height="34" viewBox="-17 -17 34 34"><circle r="14.9" fill="#fff" stroke="#dcdcdc" stroke-width="1.1"/></svg><span class="t" style="left:849.98px;top:252.15px;font-size:12.2px;color:#a6a6a6;">RT</span><svg style="left:863px;top:236.80px" width="16" height="16" viewBox="-8 -8 16 16"><circle r="7.6" fill="#8e8e8e" stroke="#f2f2f2" stroke-width="0.8"/><path d="M0,-4.6L1.35,-1.5L4.6,-1.3L2.1,0.8L2.9,4.1L0,2.3L-2.9,4.1L-2.1,0.8L-4.6,-1.3L-1.35,-1.5Z" fill="#fff"/></svg><span class="t" style="left:883.70px;top:251.75px;font-size:16px;color:#4a4a4a;letter-spacing:-0.623px;">Rosetta Townsend</span><svg style="left:1130.20px;top:245.80px;color:#444;fill:#444" width="24.0" height="24.0" viewBox="-12 -12 24 24"><rect x="-9.8" y="-5.7" width="13.5" height="11.4" rx="2"/><path d="M4.9,-1.8 L9.2,-5.4 Q9.8,-5.8 9.8,-5 L9.8,5 Q9.8,5.8 9.2,5.4 L4.9,1.8 Z"/></svg><svg style="left:1166.20px;top:245.80px;color:#e8474c;fill:#e8474c" width="24.0" height="24.0" viewBox="-12 -12 24 24"><rect x="-2.8" y="-10.5" width="5.6" height="13.6" rx="2.8"/><path d="M-5.5,-0.6 V0.6 A5.5,5.5 0 0 0 5.5,0.6 V-0.6" fill="none" stroke="currentColor" stroke-width="1.3" stroke-linecap="round"/><path d="M0,6.2 V9.6 M-4.4,9.8 H4.4" fill="none" stroke="currentColor" stroke-width="1.3" stroke-linecap="round"/><path d="M-8.4,-10.4 L9.8,7.4" stroke="#f2f2f2" stroke-width="1.6"/><path d="M-9.6,-9.5 L8.6,8.3" stroke="#e8474c" stroke-width="1.4"/></svg><svg style="left:1202.1px;top:253.90000000000003px" width="24" height="8" viewBox="-12 -4 24 8"><g fill="#c6c6c6"><circle cx="-6.8" cy="0" r="2.2"/><circle cx="0" cy="0" r="2.2"/><circle cx="6.8" cy="0" r="2.2"/></g></svg><svg style="left:841.00px;top:289.45px" width="34" height="34" viewBox="-17 -17 34 34"><circle r="14.9" fill="#fff" stroke="#dcdcdc" stroke-width="1.1"/></svg><span class="t" style="left:850.20px;top:301.15px;font-size:12.2px;color:#a6a6a6;">LC</span><svg style="left:863px;top:285.45px" width="16" height="16" viewBox="-8 -8 16 16"><circle r="7.6" fill="#8e8e8e" stroke="#f2f2f2" stroke-width="0.8"/><path d="M0,-4.6L1.35,-1.5L4.6,-1.3L2.1,0.8L2.9,4.1L0,2.3L-2.9,4.1L-2.1,0.8L-4.6,-1.3L-1.35,-1.5Z" fill="#fff"/></svg><span class="t" style="left:883.70px;top:300.75px;font-size:16px;color:#4a4a4a;letter-spacing:-0.421px;">Lucille Copeland</span><svg style="left:1130.20px;top:294.45px;color:#e8474c;fill:#e8474c" width="24.0" height="24.0" viewBox="-12 -12 24 24"><rect x="-9.8" y="-5.7" width="13.5" height="11.4" rx="2"/><path d="M4.9,-1.8 L9.2,-5.4 Q9.8,-5.8 9.8,-5 L9.8,5 Q9.8,5.8 9.2,5.4 L4.9,1.8 Z"/><path d="M-8.2,-10.2 L10.8,8.2" stroke="#f2f2f2" stroke-width="1.6"/><path d="M-9.4,-9.2 L9.6,9.2" stroke="#e8474c" stroke-width="1.4"/></svg><svg style="left:1166.20px;top:294.45px;color:#e8474c;fill:#e8474c" width="24.0" height="24.0" viewBox="-12 -12 24 24"><rect x="-2.8" y="-10.5" width="5.6" height="13.6" rx="2.8"/><path d="M-5.5,-0.6 V0.6 A5.5,5.5 0 0 0 5.5,0.6 V-0.6" fill="none" stroke="currentColor" stroke-width="1.3" stroke-linecap="round"/><path d="M0,6.2 V9.6 M-4.4,9.8 H4.4" fill="none" stroke="currentColor" stroke-width="1.3" stroke-linecap="round"/><path d="M-8.4,-10.4 L9.8,7.4" stroke="#f2f2f2" stroke-width="1.6"/><path d="M-9.6,-9.5 L8.6,8.3" stroke="#e8474c" stroke-width="1.4"/></svg><svg style="left:1202.1px;top:302.55px" width="24" height="8" viewBox="-12 -4 24 8"><g fill="#c6c6c6"><circle cx="-6.8" cy="0" r="2.2"/><circle cx="0" cy="0" r="2.2"/><circle cx="6.8" cy="0" r="2.2"/></g></svg><svg style="left:841.00px;top:338.10px" width="34" height="34" viewBox="-17 -17 34 34"><circle r="14.9" fill="#fff" stroke="#dcdcdc" stroke-width="1.1"/></svg><span class="t" style="left:851.91px;top:350.15px;font-size:12.2px;color:#a6a6a6;">Br</span><span class="t" style="left:883.70px;top:349.75px;font-size:16px;color:#4a4a4a;letter-spacing:-0.562px;">Brent</span><svg style="left:1130.20px;top:343.10px;color:#444;fill:#444" width="24.0" height="24.0" viewBox="-12 -12 24 24"><rect x="-9.8" y="-5.7" width="13.5" height="11.4" rx="2"/><path d="M4.9,-1.8 L9.2,-5.4 Q9.8,-5.8 9.8,-5 L9.8,5 Q9.8,5.8 9.2,5.4 L4.9,1.8 Z"/></svg><svg style="left:1166.20px;top:343.10px;color:#444;fill:#444" width="24.0" height="24.0" viewBox="-12 -12 24 24"><rect x="-2.8" y="-10.5" width="5.6" height="13.6" rx="2.8"/><path d="M-5.5,-0.6 V0.6 A5.5,5.5 0 0 0 5.5,0.6 V-0.6" fill="none" stroke="currentColor" stroke-width="1.3" stroke-linecap="round"/><path d="M0,6.2 V9.6 M-4.4,9.8 H4.4" fill="none" stroke="currentColor" stroke-width="1.3" stroke-linecap="round"/></svg><svg style="left:1202.1px;top:351.20000000000005px" width="24" height="8" viewBox="-12 -4 24 8"><g fill="#c6c6c6"><circle cx="-6.8" cy="0" r="2.2"/><circle cx="0" cy="0" r="2.2"/><circle cx="6.8" cy="0" r="2.2"/></g></svg><svg style="left:841.00px;top:386.75px" width="34" height="34" viewBox="-17 -17 34 34"><circle r="14.9" fill="#fff" stroke="#dcdcdc" stroke-width="1.1"/></svg><span class="t" style="left:849.53px;top:398.15px;font-size:12.2px;color:#a6a6a6;">FG</span><span class="t" style="left:883.70px;top:397.75px;font-size:16px;color:#4a4a4a;letter-spacing:-0.588px;">Fannie Goodman</span><svg style="left:1130.20px;top:391.75px;color:#444;fill:#444" width="24.0" height="24.0" viewBox="-12 -12 24 24"><rect x="-9.8" y="-5.7" width="13.5" height="11.4" rx="2"/><path d="M4.9,-1.8 L9.2,-5.4 Q9.8,-5.8 9.8,-5 L9.8,5 Q9.8,5.8 9.2,5.4 L4.9,1.8 Z"/></svg><svg style="left:1166.20px;top:391.75px;color:#444;fill:#444" width="24.0" height="24.0" viewBox="-12 -12 24 24"><rect x="-2.8" y="-10.5" width="5.6" height="13.6" rx="2.8"/><path d="M-5.5,-0.6 V0.6 A5.5,5.5 0 0 0 5.5,0.6 V-0.6" fill="none" stroke="currentColor" stroke-width="1.3" stroke-linecap="round"/><path d="M0,6.2 V9.6 M-4.4,9.8 H4.4" fill="none" stroke="currentColor" stroke-width="1.3" stroke-linecap="round"/></svg><svg style="left:1202.1px;top:399.85px" width="24" height="8" viewBox="-12 -4 24 8"><g fill="#c6c6c6"><circle cx="-6.8" cy="0" r="2.2"/><circle cx="0" cy="0" r="2.2"/><circle cx="6.8" cy="0" r="2.2"/></g></svg><svg style="left:841.00px;top:435.40px" width="34" height="34" viewBox="-17 -17 34 34"><circle r="14.9" fill="#fff" stroke="#dcdcdc" stroke-width="1.1"/></svg><span class="t" style="left:850.88px;top:447.15px;font-size:12.2px;color:#a6a6a6;">JK</span><span class="t" style="left:883.70px;top:446.75px;font-size:16px;color:#4a4a4a;letter-spacing:-0.479px;">Joel King</span><svg style="left:1130.20px;top:440.40px;color:#e8474c;fill:#e8474c" width="24.0" height="24.0" viewBox="-12 -12 24 24"><rect x="-9.8" y="-5.7" width="13.5" height="11.4" rx="2"/><path d="M4.9,-1.8 L9.2,-5.4 Q9.8,-5.8 9.8,-5 L9.8,5 Q9.8,5.8 9.2,5.4 L4.9,1.8 Z"/><path d="M-8.2,-10.2 L10.8,8.2" stroke="#f2f2f2" stroke-width="1.6"/><path d="M-9.4,-9.2 L9.6,9.2" stroke="#e8474c" stroke-width="1.4"/></svg><svg style="left:1166.20px;top:440.40px;color:#e8474c;fill:#e8474c" width="24.0" height="24.0" viewBox="-12 -12 24 24"><rect x="-2.8" y="-10.5" width="5.6" height="13.6" rx="2.8"/><path d="M-5.5,-0.6 V0.6 A5.5,5.5 0 0 0 5.5,0.6 V-0.6" fill="none" stroke="currentColor" stroke-width="1.3" stroke-linecap="round"/><path d="M0,6.2 V9.6 M-4.4,9.8 H4.4" fill="none" stroke="currentColor" stroke-width="1.3" stroke-linecap="round"/><path d="M-8.4,-10.4 L9.8,7.4" stroke="#f2f2f2" stroke-width="1.6"/><path d="M-9.6,-9.5 L8.6,8.3" stroke="#e8474c" stroke-width="1.4"/></svg><svg style="left:1202.1px;top:448.5px" width="24" height="8" viewBox="-12 -4 24 8"><g fill="#c6c6c6"><circle cx="-6.8" cy="0" r="2.2"/><circle cx="0" cy="0" r="2.2"/><circle cx="6.8" cy="0" r="2.2"/></g></svg><svg style="left:841.00px;top:484.05px" width="34" height="34" viewBox="-17 -17 34 34"><circle r="14.9" fill="#fff" stroke="#dcdcdc" stroke-width="1.1"/></svg><span class="t" style="left:851.56px;top:496.15px;font-size:12.2px;color:#a6a6a6;">LJ</span><span class="t" style="left:883.70px;top:495.75px;font-size:16px;color:#4a4a4a;letter-spacing:-0.624px;">Lillian James</span><svg style="left:1130.20px;top:489.05px;color:#444;fill:#444" width="24.0" height="24.0" viewBox="-12 -12 24 24"><rect x="-9.8" y="-5.7" width="13.5" height="11.4" rx="2"/><path d="M4.9,-1.8 L9.2,-5.4 Q9.8,-5.8 9.8,-5 L9.8,5 Q9.8,5.8 9.2,5.4 L4.9,1.8 Z"/></svg><svg style="left:1166.20px;top:489.05px;color:#444;fill:#444" width="24.0" height="24.0" viewBox="-12 -12 24 24"><rect x="-2.8" y="-10.5" width="5.6" height="13.6" rx="2.8"/><path d="M-5.5,-0.6 V0.6 A5.5,5.5 0 0 0 5.5,0.6 V-0.6" fill="none" stroke="currentColor" stroke-width="1.3" stroke-linecap="round"/><path d="M0,6.2 V9.6 M-4.4,9.8 H4.4" fill="none" stroke="currentColor" stroke-width="1.3" stroke-linecap="round"/></svg><svg style="left:1202.1px;top:497.15000000000003px" width="24" height="8" viewBox="-12 -4 24 8"><g fill="#c6c6c6"><circle cx="-6.8" cy="0" r="2.2"/><circle cx="0" cy="0" r="2.2"/><circle cx="6.8" cy="0" r="2.2"/></g></svg><span class="t" style="left:847.60px;top:564.15px;font-size:13.2px;color:#444;letter-spacing:-0.951px;">PRESENTER</span><svg style="left:927.5px;top:567px" width="9" height="5" viewBox="0 0 9 5"><path d="M0.3,0.4H8.3L4.3,4.4Z" fill="#555"/></svg><div style="left:991.4px;top:554.2px;width:111.5px;height:29.2px;border:1px solid #cfcfcf;border-radius:15px"></div><svg style="left:1019.90px;top:560.50px;color:#555;fill:#555" width="16.799999999999997" height="16.799999999999997" viewBox="-12 -12 24 24"><rect x="-2.8" y="-10.5" width="5.6" height="13.6" rx="2.8"/><path d="M-5.5,-0.6 V0.6 A5.5,5.5 0 0 0 5.5,0.6 V-0.6" fill="none" stroke="currentColor" stroke-width="1.3" stroke-linecap="round"/><path d="M0,6.2 V9.6 M-4.4,9.8 H4.4" fill="none" stroke="currentColor" stroke-width="1.3" stroke-linecap="round"/><path d="M-8.4,-10.4 L9.8,7.4" stroke="#fff" stroke-width="1.6"/><path d="M-9.6,-9.5 L8.6,8.3" stroke="#555" stroke-width="1.4"/></svg><span class="t" style="left:1039.70px;top:563.15px;font-size:13.2px;color:#4a4a4a;letter-spacing:-0.592px;">MUTE</span><div style="left:1113.2px;top:554.2px;width:111.5px;height:29.2px;border:1px solid #cfcfcf;border-radius:15px"></div><svg style="left:1132.10px;top:560.50px;color:#555;fill:#555" width="16.799999999999997" height="16.799999999999997" viewBox="-12 -12 24 24"><rect x="-2.8" y="-10.5" width="5.6" height="13.6" rx="2.8"/><path d="M-5.5,-0.6 V0.6 A5.5,5.5 0 0 0 5.5,0.6 V-0.6" fill="none" stroke="currentColor" stroke-width="1.3" stroke-linecap="round"/><path d="M0,6.2 V9.6 M-4.4,9.8 H4.4" fill="none" stroke="currentColor" stroke-width="1.3" stroke-linecap="round"/></svg><span class="t" style="left:1151.00px;top:563.15px;font-size:13.2px;color:#4a4a4a;letter-spacing:-0.284px;">UNMUTE</span><div class="p" style="left:833px;top:603px;width:401.5px;height:48.5px"></div><span class="t" style="left:852.60px;top:617.25px;font-size:19px;color:#4a4a4a;">Q&amp;A</span><svg style="left:1200.5px;top:618.5px" width="18" height="18" viewBox="0 0 18 18"><path d="M9,0.5V17.5M0.5,9H17.5" stroke="#555" stroke-width="1.3" fill="none"/></svg><div style="left:0px;top:661.3px;width:1244px;height:38.7px;background:#3b4958"></div><span class="t" style="left:19.00px;top:670.50px;font-size:18.5px;color:#fff;letter-spacing:-1.551px;-webkit-text-stroke:0.45px #fff;">BlueJeans</span><div style="left:100.3px;top:675px;width:1px;height:12px;background:#6b7885"></div><svg style="left:108px;top:676px" width="13" height="9" viewBox="0 0 13 9"><rect x="0" y="0" width="12.6" height="8.8" fill="#fff"/><path d="M1.3,1.2H2.2A3.2,3.2 0 0 1 2.2,7.6H1.3Z M11.3,1.2H10.4A3.2,3.2 0 0 0 10.4,7.6H11.3Z" fill="#3b4958"/></svg><span class="t" style="left:122.30px;top:676.95px;font-size:9.6px;color:#fff;font-weight:700;letter-spacing:-0.770px;">DOLBY</span><span class="t" style="left:154.60px;top:676.95px;font-size:9.6px;color:#fff;letter-spacing:-1.215px;">VOICE</span><span class="t" style="left:378.70px;top:675.95px;font-size:11.6px;color:#a7b2bd;letter-spacing:-0.438px;">ABOUT</span><span class="t" style="left:436.80px;top:675.95px;font-size:11.6px;color:#a7b2bd;letter-spacing:-1.095px;">TERMS</span><span class="t" style="left:491.00px;top:675.95px;font-size:11.6px;color:#a7b2bd;letter-spacing:-0.706px;">POLICY</span><span class="t" style="left:550.00px;top:675.95px;font-size:11.6px;color:#a7b2bd;letter-spacing:-0.659px;">THIRD PARTY COPYRIGHT</span><div style="left:425.0px;top:679.7px;width:3px;height:3px;background:#6f7c89;border-radius:50%"></div><div style="left:480.5px;top:679.7px;width:3px;height:3px;background:#6f7c89;border-radius:50%"></div><div style="left:538.8px;top:679.7px;width:3px;height:3px;background:#6f7c89;border-radius:50%"></div><span class="t" style="left:708.60px;top:675.95px;font-size:11.6px;color:#a7b2bd;letter-spacing:-0.217px;">Blue Jeans Network, Inc. © 2017</span><span class="t" style="left:1149.50px;top:666.75px;font-size:11px;color:#fff;letter-spacing:-0.283px;">HELP CENTER</span><span class="t" style="left:1137.00px;top:681.95px;font-size:11.6px;color:#a7b2bd;letter-spacing:-0.537px;">+1 (408) 791 2830</span></body></html>
